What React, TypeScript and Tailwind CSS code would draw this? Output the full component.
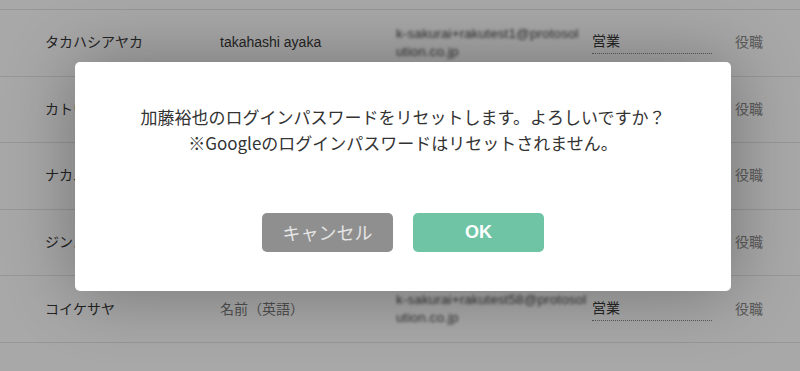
import React from "react";

const jp = { fontFamily: '"Liberation Sans", "Noto Sans CJK JP", sans-serif' };

type Row = { kana: string; en: string; enPlaceholder?: boolean; email: [string, string] };

const rows: Row[] = [
  { kana: "タカハシアヤカ", en: "takahashi ayaka", email: ["k-sakurai+rakutest1@protosol", "ution.co.jp"] },
  { kana: "カトウユウヤ", en: "kato yuya", email: ["k-sakurai+rakutest2@protosol", "ution.co.jp"] },
  { kana: "ナカムラケン", en: "nakamura ken", email: ["k-sakurai+rakutest3@protosol", "ution.co.jp"] },
  { kana: "ジンノアキ", en: "jinno aki", email: ["k-sakurai+rakutest4@protosol", "ution.co.jp"] },
  { kana: "コイケサヤ", en: "名前（英語）", enPlaceholder: true, email: ["k-sakurai+rakutest58@protosol", "ution.co.jp"] },
];

export default function App() {
  return (
    <div className="relative w-[800px] h-[371px] overflow-hidden bg-white" style={jp}>
      {/* underlying table */}
      <div className="flex flex-col">
        <div className="h-[10px] border-b border-[#e6e6e6]" />
        {rows.map((r, i) => (
          <div key={i} className="h-[66.6px] border-b border-[#e6e6e6] flex items-center text-[14px] text-[#383838]">
            <div className="w-[220px] pl-[45px] shrink-0">{r.kana}</div>
            <div className={"w-[176px] shrink-0 " + (r.enPlaceholder ? "text-[#7a7a7a]" : "")}>{r.en}</div>
            <div className="w-[196px] shrink-0 pr-[6px]">
              <div className="whitespace-nowrap text-[13.5px] tracking-[0.1px] leading-[18px] text-[#4a4a4a] blur-[1.4px]">
                <div>{r.email[0]}</div>
                <div>{r.email[1]}</div>
              </div>
            </div>
            <div className="w-[143px] shrink-0">
              <div className="w-[120px] border-b border-dotted border-[#888] pb-[2px] leading-[20px]">営業</div>
            </div>
            <div className="text-[#888]">役職</div>
          </div>
        ))}
      </div>

      {/* overlay */}
      <div className="absolute inset-0 bg-black/[0.34]" />

      {/* modal */}
      <div
        className="absolute left-[75px] top-[62px] w-[656px] h-[229px] bg-white rounded-[5px] shadow-[0_0_70px_rgba(0,0,0,0.32)] flex flex-col items-center"
        style={{ fontFamily: '"Noto Sans CJK JP", sans-serif' }}
      >
        <div className="pt-[42px] text-center text-[17px] leading-[26px] text-[#333]">
          <div>加藤裕也のログインパスワードをリセットします。よろしいですか？</div>
          <div>※Googleのログインパスワードはリセットされません。</div>
        </div>
        <div className="mt-[57px] flex gap-[20px]">
          <button className="w-[131px] h-[39px] rounded-[5px] bg-[#8f8f8f] text-[#e4e4e4] text-[18px] flex items-center justify-center">
            キャンセル
          </button>
          <button
            className="w-[131px] h-[39px] rounded-[5px] bg-[#6fc4a6] text-white text-[18px] font-bold flex items-center justify-center"
            style={{ fontFamily: '"Liberation Sans", sans-serif' }}
          >
            OK
          </button>
        </div>
      </div>
    </div>
  );
}
